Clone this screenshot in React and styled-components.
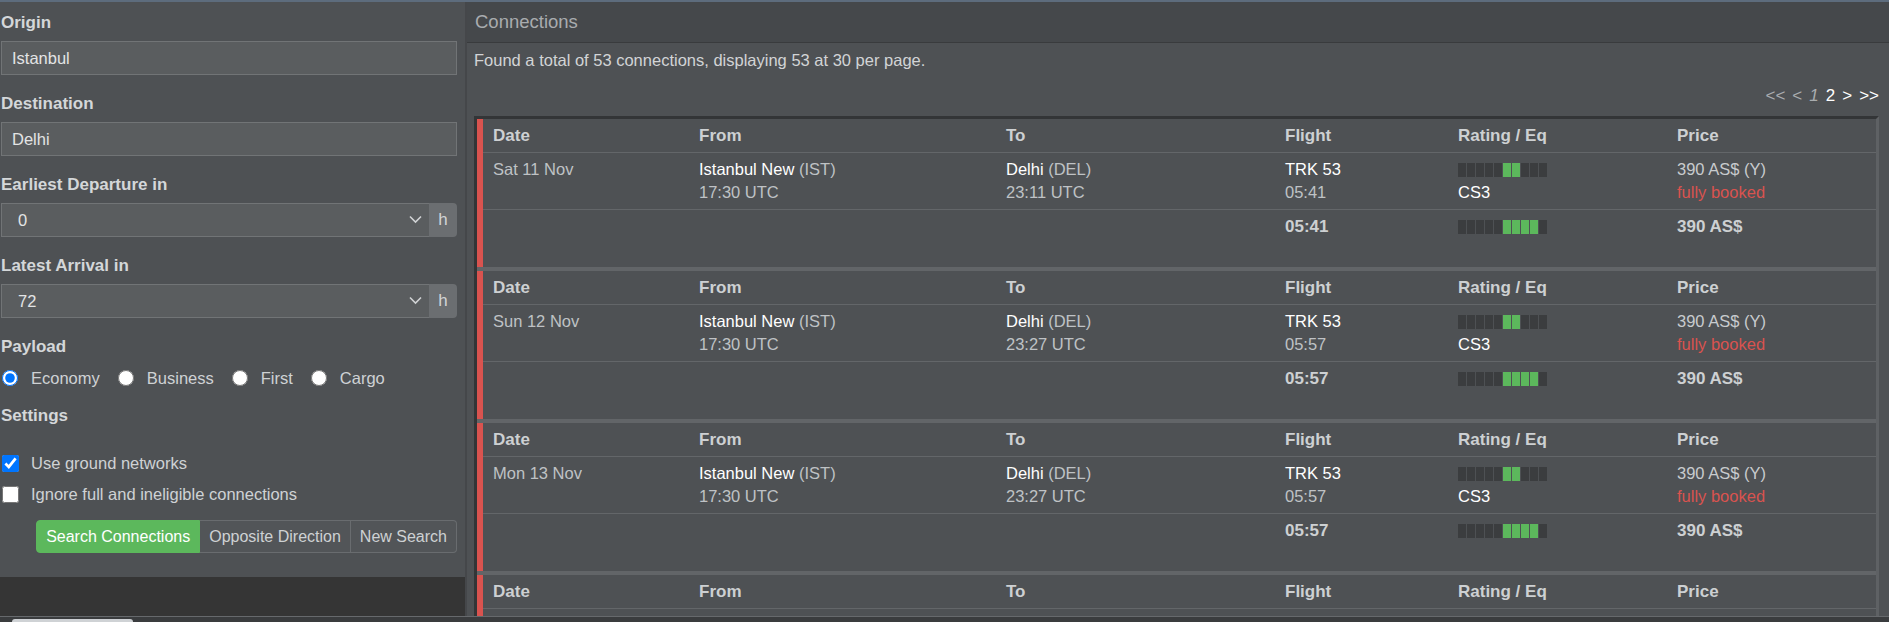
import React from 'react';
import styled, { createGlobalStyle } from 'styled-components';

const GlobalStyle = createGlobalStyle`
  html, body {
    margin: 0;
    padding: 0;
  }

  body {
    background: #353535;
    border-top: 2px solid #5d6c7d;
    font-family: "Liberation Sans", Arial, sans-serif;
    font-size: 16.5px;
    color: #cdd0d2;
    overflow: hidden;
  }
`;

const Page = styled.div`
  display: flex;
  height: 614px;
  overflow: hidden;
`;

const LeftColumn = styled.div`
  width: 465px;
  flex-shrink: 0;
  background: #353535;
`;

const Sidebar = styled.aside`
  background: #4e5154;
  padding: 11px 8px 24px 1px;
`;

const Field = styled.div`
  margin-bottom: 19px;
`;

const Label = styled.div`
  font-weight: bold;
  font-size: 17px;
  line-height: 20px;
  color: #d4d7d9;
  margin-bottom: ${p => p.$gap ?? 8}px;
`;

const TextInput = styled.input`
  display: block;
  width: 100%;
  height: 34px;
  box-sizing: border-box;
  background: #5a5d5f;
  border: 1px solid #717476;
  color: #e3e4e5;
  font: inherit;
  padding: 0 10px;
  outline: none;
`;

const SelectGroup = styled.div`
  display: flex;
  height: 34px;
`;

const SelectBox = styled.div`
  position: relative;
  flex: 1;
  display: flex;
`;

const Select = styled.select`
  appearance: none;
  flex: 1;
  height: 34px;
  background: #5a5d5f;
  border: 1px solid #717476;
  border-right: none;
  color: #e3e4e5;
  font: inherit;
  padding: 0 0 0 16px;
  outline: none;
`;

const Chevron = styled.svg`
  position: absolute;
  right: 7px;
  top: 12px;
  pointer-events: none;
`;

const Addon = styled.span`
  width: 28px;
  display: flex;
  align-items: center;
  justify-content: center;
  background: #6b6e71;
  color: #d2d4d6;
  font-size: 17px;
  line-height: 34px;
  border-radius: 0 4px 4px 0;
`;

const RadioRow = styled.div`
  display: flex;
  align-items: center;
  height: 20px;
  margin: 11px 0 18px 1px;
`;

const Choice = styled.label`
  display: flex;
  align-items: center;
  gap: 13px;
  margin-right: 18px;
  color: #cfd2d4;
  line-height: 20px;
`;

const Radio = styled.input.attrs({ type: 'radio' })`
  width: 16px;
  height: 16px;
  margin: 0;
`;

const CheckRow = styled.label`
  display: flex;
  align-items: center;
  gap: 12px;
  height: 20px;
  line-height: 20px;
  margin: ${p => p.$top}px 0 0 1px;
  color: #cfd2d4;
`;

const Checkbox = styled.input.attrs({ type: 'checkbox' })`
  width: 17px;
  height: 17px;
  margin: 0;
`;

const ButtonGroup = styled.div`
  display: flex;
  justify-content: flex-end;
  margin-top: 16px;
`;

const Button = styled.button`
  height: 33px;
  line-height: 31px;
  padding: 0 9px;
  font-family: inherit;
  font-size: 16px;
  color: ${p => (p.$primary ? '#fff' : '#ced1d3')};
  background: ${p => (p.$primary ? '#5cb85c' : '#525558')};
  border: 1px solid ${p => (p.$primary ? '#5cb85c' : '#696c6f')};
  border-left-width: ${p => (p.$first ? 1 : 0)}px;
  border-radius: ${p => (p.$first ? '4px 0 0 4px' : p.$last ? '0 4px 4px 0' : '0')};
`;

const Main = styled.section`
  flex: 1;
  background: #4e5154;
  border-left: 2px solid #45474a;
  overflow: hidden;
`;

const PanelHeader = styled.div`
  height: 40px;
  line-height: 40px;
  background: #45484b;
  border-bottom: 1px solid #393b3d;
  padding-left: 8px;
  font-size: 18.5px;
  color: #a9acaf;
`;

const Content = styled.div`
  padding: 6px 10px 0 7px;
`;

const Summary = styled.p`
  margin: 0;
  line-height: 23px;
  color: #d2d4d6;
`;

const Pager = styled.div`
  display: flex;
  justify-content: flex-end;
  gap: 7px;
  margin-top: 12px;
  line-height: 23px;
  font-size: 17px;
`;

const PageLink = styled.span`
  color: ${p => (p.$active ? '#fff' : '#a9acaf')};
  font-style: ${p => (p.$italic ? 'italic' : 'normal')};
`;

const TableFrame = styled.div`
  margin-top: 9px;
  border-top: 3px solid #333537;
  border-left: 3px solid #333537;
  border-right: 3px solid #5e6164;
`;

const Block = styled.div`
  & + & {
    border-top: 4px solid #626568;
  }
`;

const BlockBody = styled.div`
  border-left: 6px solid #d9534f;
`;

const Row = styled.div`
  display: grid;
  grid-template-columns: 206px 307px 279px 173px 219px 1fr;
  border-bottom: ${p => (p.$last ? 'none' : '1px solid #636669')};
  padding: ${p => (p.$head ? '0' : p.$last ? '5px 0 6px' : '5px 0')};
  height: ${p => (p.$head ? '33px' : 'auto')};
  align-items: ${p => (p.$head ? 'center' : 'start')};
`;

const HeadCell = styled.div`
  padding-left: 10px;
  font-weight: bold;
  font-size: 17px;
  color: #cdd0d2;
`;

const Cell = styled.div`
  padding-left: 10px;
  min-height: 46px;
`;

const Line = styled.div`
  display: flex;
  align-items: center;
  height: 23px;
  white-space: nowrap;
  color: ${p => p.$color || '#bfc2c5'};
  font-weight: ${p => (p.$bold ? 'bold' : 'normal')};
  font-size: ${p => (p.$bold ? '17px' : 'inherit')};
`;

const Strong = styled.span`
  color: #fff;
`;

const Muted = styled.span`
  color: #bfc2c5;
  white-space: pre;
`;

const Bar = styled.span`
  display: inline-flex;
  gap: 1px;
`;

const Segment = styled.span`
  width: 8px;
  height: 14px;
  background: ${p => (p.$on ? '#5cb85c' : '#3b3d3f')};
`;

const Footer = styled.div`
  height: 5px;
  border-top: 1px solid #66696c;
  background: #3a3c3e;
`;

const FooterTab = styled.div`
  width: 121px;
  height: 3px;
  margin: 2px 0 0 12px;
  background: #cfd2d5;
  border-radius: 3px 3px 0 0;
`;

const RatingBar = ({ on }) => (
  <Bar>
    {Array.from({ length: 10 }, (_, i) => (
      <Segment key={i} $on={on.includes(i)} />
    ))}
  </Bar>
);

const HourSelect = ({ value }) => (
  <SelectGroup>
    <SelectBox>
      <Select defaultValue={value}>
        <option>{value}</option>
      </Select>
      <Chevron width="13" height="9" viewBox="0 0 13 9">
        <path d="M1 1.5l5.5 5.5 5.5-5.5" fill="none" stroke="#d0d2d4" strokeWidth="1.6" />
      </Chevron>
    </SelectBox>
    <Addon>h</Addon>
  </SelectGroup>
);

const connections = [
  { date: 'Sat 11 Nov', dep: '17:30 UTC', arr: '23:11 UTC', time: '05:41' },
  { date: 'Sun 12 Nov', dep: '17:30 UTC', arr: '23:27 UTC', time: '05:57' },
  { date: 'Mon 13 Nov', dep: '17:30 UTC', arr: '23:27 UTC', time: '05:57' },
  { date: 'Tue 14 Nov', partial: true },
];

const headers = ['Date', 'From', 'To', 'Flight', 'Rating / Eq', 'Price'];

const ConnectionBlock = ({ c }) => (
  <Block>
    <BlockBody>
      <Row $head>
        {headers.map(h => (
          <HeadCell key={h}>{h}</HeadCell>
        ))}
      </Row>
      {/* the last block is cut off by the page edge below its header */}
      {c.partial ? (
        <Row>
          <Cell />
        </Row>
      ) : (
        <>
          <Row>
            <Cell>
              <Line>{c.date}</Line>
            </Cell>
            <Cell>
              <Line>
                <Strong>Istanbul New</Strong>
                <Muted> (IST)</Muted>
              </Line>
              <Line>{c.dep}</Line>
            </Cell>
            <Cell>
              <Line>
                <Strong>Delhi</Strong>
                <Muted> (DEL)</Muted>
              </Line>
              <Line>{c.arr}</Line>
            </Cell>
            <Cell>
              <Line $color="#fff">TRK 53</Line>
              <Line>{c.time}</Line>
            </Cell>
            <Cell>
              <Line>
                <RatingBar on={[5, 6]} />
              </Line>
              <Line $color="#fff">CS3</Line>
            </Cell>
            <Cell>
              <Line $color="#c8cbce">390 AS$ (Y)</Line>
              <Line $color="#d9534f">fully booked</Line>
            </Cell>
          </Row>
          <Row $last>
            <Cell />
            <Cell />
            <Cell />
            <Cell>
              <Line $bold $color="#cdd0d2">{c.time}</Line>
            </Cell>
            <Cell>
              <Line>
                <RatingBar on={[5, 6, 7, 8]} />
              </Line>
            </Cell>
            <Cell>
              <Line $bold $color="#cdd0d2">390 AS$</Line>
            </Cell>
          </Row>
        </>
      )}
    </BlockBody>
  </Block>
);

const App = () => {
  return (
    <>
      <GlobalStyle />
      <Page>
        <LeftColumn>
          <Sidebar>
            <Field>
              <Label>Origin</Label>
              <TextInput defaultValue="Istanbul" />
            </Field>
            <Field>
              <Label>Destination</Label>
              <TextInput defaultValue="Delhi" />
            </Field>
            <Field>
              <Label>Earliest Departure in</Label>
              <HourSelect value="0" />
            </Field>
            <Field>
              <Label>Latest Arrival in</Label>
              <HourSelect value="72" />
            </Field>

            <Label $gap={0}>Payload</Label>
            <RadioRow>
              <Choice>
                <Radio name="payload" defaultChecked />
                Economy
              </Choice>
              <Choice>
                <Radio name="payload" />
                Business
              </Choice>
              <Choice>
                <Radio name="payload" />
                First
              </Choice>
              <Choice>
                <Radio name="payload" />
                Cargo
              </Choice>
            </RadioRow>

            <Label $gap={0}>Settings</Label>
            <CheckRow $top={27}>
              <Checkbox defaultChecked />
              Use ground networks
            </CheckRow>
            <CheckRow $top={11}>
              <Checkbox />
              Ignore full and ineligible connections
            </CheckRow>

            <ButtonGroup>
              <Button $primary $first>Search Connections</Button>
              <Button>Opposite Direction</Button>
              <Button $last>New Search</Button>
            </ButtonGroup>
          </Sidebar>
        </LeftColumn>

        <Main>
          <PanelHeader>Connections</PanelHeader>
          <Content>
            <Summary>Found a total of 53 connections, displaying 53 at 30 per page.</Summary>
            <Pager>
              <PageLink>&lt;&lt;</PageLink>
              <PageLink>&lt;</PageLink>
              <PageLink $italic>1</PageLink>
              <PageLink $active>2</PageLink>
              <PageLink $active>&gt;</PageLink>
              <PageLink $active>&gt;&gt;</PageLink>
            </Pager>
            <TableFrame>
              {connections.map(c => (
                <ConnectionBlock key={c.date} c={c} />
              ))}
            </TableFrame>
          </Content>
        </Main>
      </Page>
      <Footer>
        <FooterTab />
      </Footer>
    </>
  );
};

export default App;
